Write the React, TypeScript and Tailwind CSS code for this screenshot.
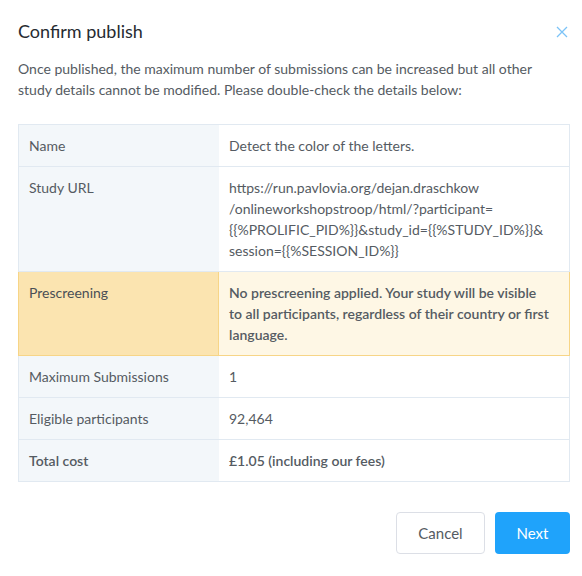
import React from 'react';

const rows = [
  { label: 'Name', value: 'Detect the color of the letters.' },
  {
    label: 'Study URL',
    value: (
      <>
        https://run.pavlovia.org/dejan.draschkow
        <br />
        /onlineworkshopstroop/html/?participant=
        <br />
        {'{{%PROLIFIC_PID%}}&study_id={{%STUDY_ID%}}&'}
        <br />
        {'session={{%SESSION_ID%}}'}
      </>
    ),
  },
  {
    label: 'Prescreening',
    value: (
      <>
        No prescreening applied. Your study will be visible
        <br />
        to all participants, regardless of their country or first
        <br />
        language.
      </>
    ),
    warn: true,
  },
  { label: 'Maximum Submissions', value: '1' },
  { label: 'Eligible participants', value: '92,464' },
  { label: 'Total cost', value: '£1.05 (including our fees)', bold: true },
];

export default function App() {
  return (
    <div
      className="w-[582px] h-[576px] bg-white pl-[18px] pr-[12px] text-[14px] text-[#555b62]"
      style={{ fontFamily: 'Lato, "Noto Sans", sans-serif' }}
    >
      <div className="flex items-center justify-between h-[62px] pt-[1px]">
        <h1 className="text-[18px] text-[#262b31]">Confirm publish</h1>
        <svg width="12" height="12" viewBox="0 0 12 12" className="mr-[2px]">
          <path d="M1 1L11 11M11 1L1 11" stroke="#7cc3f7" strokeWidth="1.3" />
        </svg>
      </div>
      <p className="leading-[21px] -mt-[4px] mb-[24px] whitespace-nowrap">
        Once published, the maximum number of submissions can be increased but all other
        <br />
        study details cannot be modified. Please double-check the details below:
      </p>
      <div className="border-t border-[#e1e9f1]">
        {rows.map((r) => (
          <div
            key={r.label}
            className={
              r.warn
                ? 'flex border border-t-0 border-[#f7d587] leading-[21px]'
                : 'flex border border-t-0 border-[#e1e9f1] leading-[21px]'
            }
          >
            <div
              className={
                (r.warn ? 'bg-[#fbe4b0] border-r border-[#f7d587] text-[#4a4f55] ' : 'bg-[#f3f7fa] ') +
                (r.bold ? 'font-semibold ' : '') +
                'w-[200px] shrink-0 py-[10px] px-[10px]'
              }
            >
              {r.label}
            </div>
            <div
              className={
                (r.warn ? 'bg-[#fef7e5] font-semibold ' : 'bg-white ') +
                (r.bold ? 'font-semibold ' : '') +
                'flex-1 py-[10px] px-[10px] whitespace-nowrap'
              }
            >
              {r.value}
            </div>
          </div>
        ))}
      </div>
      <div className="flex justify-end gap-[10px] mt-[30px]">
        <button className="h-[42px] w-[89px] rounded-[4px] border border-[#dcdfe6] bg-white text-[15px] text-[#555b62]">
          Cancel
        </button>
        <button className="h-[42px] w-[75px] rounded-[4px] bg-[#1fa3fb] text-[15px] text-white">
          Next
        </button>
      </div>
    </div>
  );
}
